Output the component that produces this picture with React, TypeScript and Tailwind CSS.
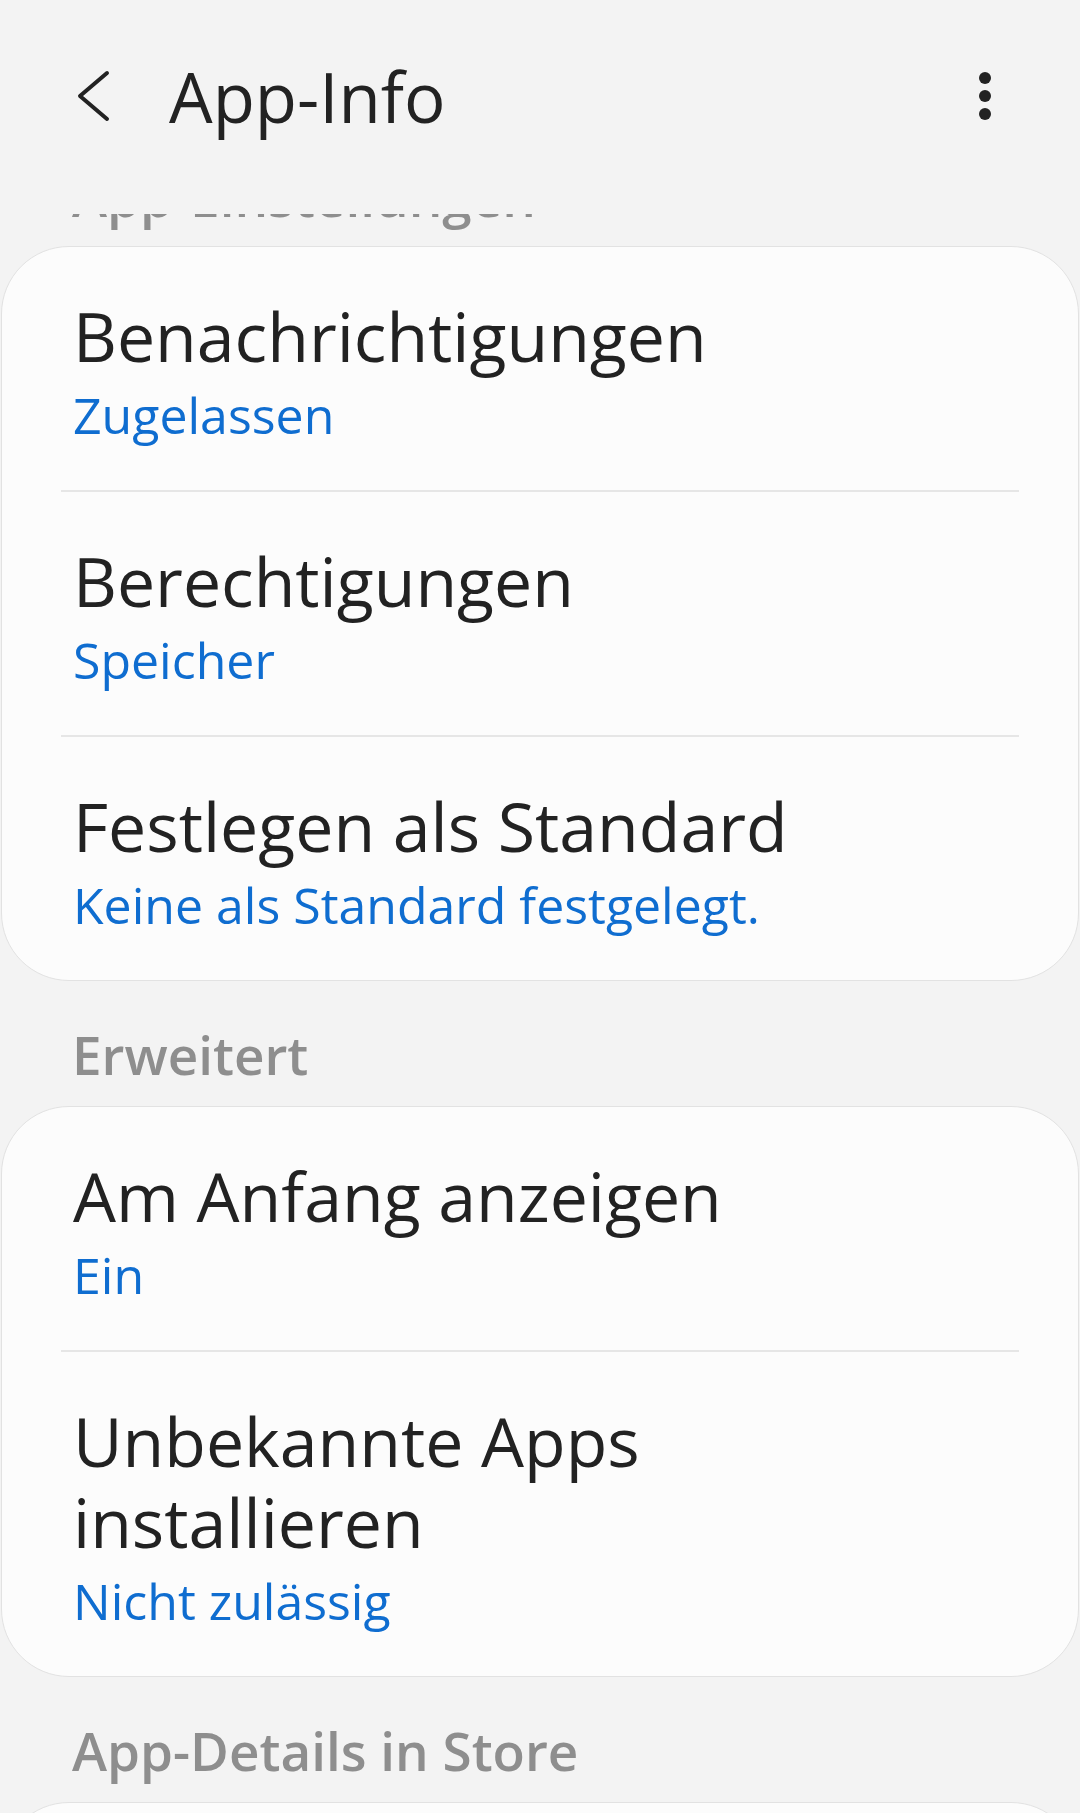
import React from 'react';

type Item = { title: string; value: string };

const einstellungen: Item[] = [
  { title: 'Benachrichtigungen', value: 'Zugelassen' },
  { title: 'Berechtigungen', value: 'Speicher' },
  { title: 'Festlegen als Standard', value: 'Keine als Standard festgelegt.' },
];

const erweitert: Item[] = [
  { title: 'Am Anfang anzeigen', value: 'Ein' },
  { title: 'Unbekannte Apps installieren', value: 'Nicht zulässig' },
];

const font = { fontFamily: '"Open Sans", "Noto Sans", sans-serif' };

const SettingsCard: React.FC<{ items: Item[] }> = ({ items }) => (
  <div className="mx-px rounded-[68px] border border-[#e2e2e2] bg-[#fcfcfc]">
    {items.map((item, i) => (
      <div key={item.title}>
        {i > 0 && <div className="mx-[59px] h-[2px] bg-[#e6e6e6]" />}
        <div className="pl-[71px] pr-[120px] pt-[48px] pb-[44px]">
          <div className="text-[68px] leading-[81px] text-[#222222]">{item.title}</div>
          <div className="mt-[8px] text-[50px] leading-[62px] text-[#0f6dd0]">{item.value}</div>
        </div>
      </div>
    ))}
  </div>
);

const SectionHeader: React.FC<{ label: string }> = ({ label }) => (
  <div className="pl-[72px] pt-[46px] pb-[24px] text-[53px] font-semibold leading-[55px] text-[#8e8e8e]">
    {label}
  </div>
);

export default function App() {
  return (
    <div className="h-[1813px] w-[1080px] overflow-hidden bg-[#f3f3f3]" style={font}>
      {/* app bar */}
      <div className="flex h-[68px] items-center mt-[62px] pl-[76px] pr-[88px]">
        <svg width="36" height="52" viewBox="0 0 36 52" className="shrink-0">
          <path d="M31 3 L4 26 L31 49" fill="none" stroke="#222222" strokeWidth="4" strokeLinecap="round" strokeLinejoin="round" />
        </svg>
        <div className="ml-[57px] flex-1 text-[69px] leading-[68px] text-[#222222]">App-Info</div>
        <svg width="14" height="50" viewBox="0 0 14 50" className="shrink-0">
          <circle cx="7" cy="7" r="6" fill="#222222" />
          <circle cx="7" cy="25" r="6" fill="#222222" />
          <circle cx="7" cy="43" r="6" fill="#222222" />
        </svg>
      </div>

      {/* section header scrolled under the bar */}
      <div className="mt-[84px] h-[32px] overflow-hidden">
        <div className="-mt-[45px] pl-[72px] text-[53px] font-semibold leading-[55px] text-[#8e8e8e]">
          App-Einstellungen
        </div>
      </div>

      <SettingsCard items={einstellungen} />
      <SectionHeader label="Erweitert" />
      <SettingsCard items={erweitert} />
      <SectionHeader label="App-Details in Store" />
      <div className="mx-px h-[200px] rounded-[68px] border border-[#e2e2e2] bg-[#fcfcfc]" />
    </div>
  );
}
